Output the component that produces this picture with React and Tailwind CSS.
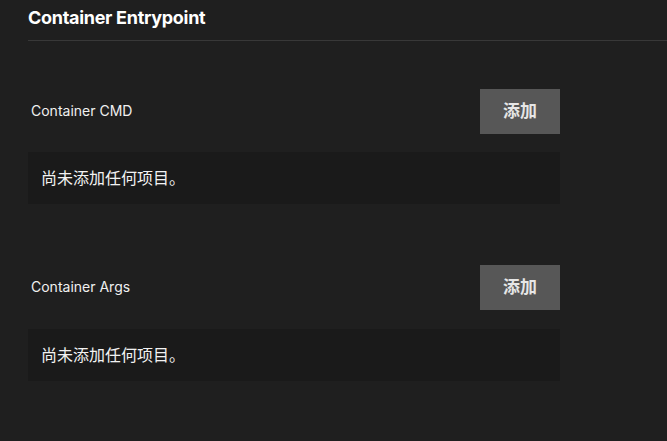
import React from 'react';

const font = { fontFamily: 'Inter, "Noto Sans CJK SC", sans-serif' };

const ListField = ({ label, boxGap = 'mt-[18px]' }) => {
  return (
    <div className="flex flex-col">
      <div className="flex items-center justify-between h-[45px]">
        <span className="pl-[3px] text-[14px] text-[#f0f0f0] leading-[20px] -mt-[2px]">{label}</span>
        <button className="w-[80px] h-[45px] bg-[#575757] text-[17px] font-bold text-[#e6e6e6]">
          添加
        </button>
      </div>
      <div className={`${boxGap} h-[52px] bg-[#1a1a1a] flex items-center px-[13px] text-[16px] text-[#f2f2f2]`}>
        尚未添加任何项目。
      </div>
    </div>
  );
};

const App = () => {
  return (
    <div className="min-h-[441px] bg-[#1f1f1f] pl-[28px]" style={font}>
      <div className="pt-[5px] h-[41px] border-b border-[#383838]">
        <h2 className="text-[18px] font-bold text-white leading-[26px] tracking-[-0.3px]">Container Entrypoint</h2>
      </div>
      <div className="w-[532px] pt-[48px] flex flex-col gap-[61px]">
        <ListField label="Container CMD" />
        <ListField label="Container Args" boxGap="mt-[19px]" />
      </div>
    </div>
  );
};

export default App;
